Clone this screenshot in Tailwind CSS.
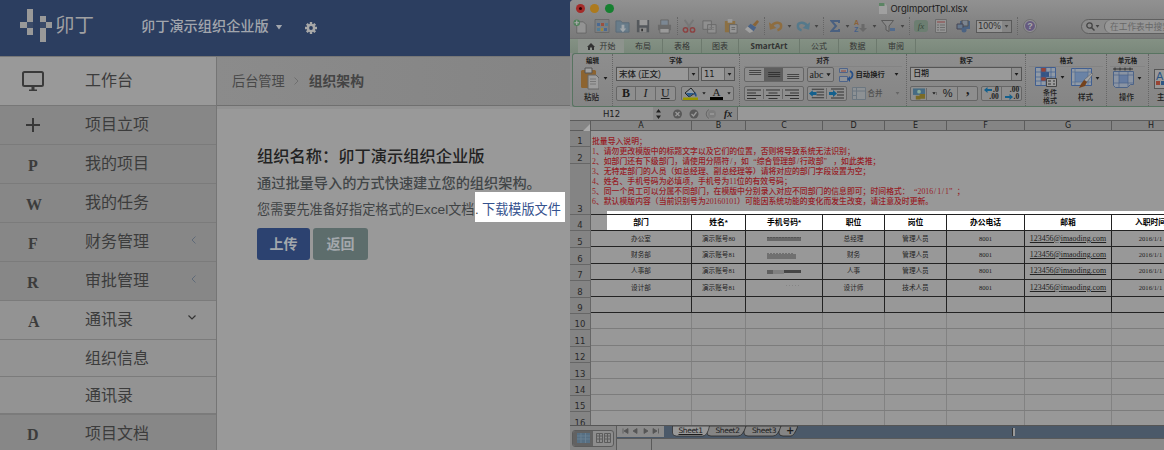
<!DOCTYPE html>
<html lang="zh-CN">
<head>
<meta charset="utf-8">
<title>组织架构导入</title>
<script src="https://cdn.jsdelivr.net/npm/@tailwindcss/browser@4"></script>
</head>
<body class="w-[1164px] h-[450px] overflow-hidden bg-[#999] font-['Liberation_Sans','Noto_Sans_CJK_SC',sans-serif]">
<svg class="hidden">
  <defs>
    <symbol id="caret" viewBox="0 0 6 4"><path d="M.5 0h5L3 3.6z" fill="currentColor"/></symbol>
    <symbol id="al" viewBox="0 0 14 10"><path d="M0 1h14M0 4h9M0 6.500h14M0 9.500h9" stroke="#333"/></symbol>
    <symbol id="ac" viewBox="0 0 14 10"><path d="M0 1h14M2.500 4h9M0 6.500h14M2.500 9.500h9" stroke="#333"/></symbol>
    <symbol id="ar" viewBox="0 0 14 10"><path d="M0 1h14M5 4h9M0 6.500h14M5 9.500h9" stroke="#333"/></symbol>
  </defs>
</svg>
<div class="flex w-[1164px] h-[450px]">

<!-- web app -->
<div class="w-[570px] h-[450px] flex flex-col shrink-0 overflow-hidden">
  <header class="h-[56px] shrink-0 bg-[#2c3e60] flex items-center text-[#a2a6ad]">
    <svg class="ml-5 w-8 h-[34px] -mt-1.5" viewBox="0 0 32 34" fill="#999"><path d="M7 1h6v13H7zM0 14h7v6H0zM7 20h6v7H7zM20 8h6v6h-6zM26 14h6v6h-6zM20 20h6v14h-6z"/><path d="M7 14h6v6H7zM20 14h6v6h-6z" fill="#3a4a68"/></svg>
    <span class="ml-[3px] w-[41px] -mt-[7px] text-[19.500px] leading-5 font-normal text-[#a0a0a2] whitespace-nowrap">卯丁</span>
    <span class="ml-[45px] -mt-[4px] text-[14.200px] font-medium leading-5 whitespace-nowrap">卯丁演示组织企业版</span>
    <svg class="ml-[6px] w-2 h-[5px] -mt-[2px]" viewBox="0 0 6 4"><use href="#caret"/></svg>
    <svg class="ml-[22px] w-3 h-3" viewBox="0 0 12 12"><g stroke="#a8a8a8" stroke-width="2.400"><path d="M6 0v12M0 6h12M1.800 1.800l8.400 8.400M10.200 1.800l-8.400 8.400"/></g><circle cx="6" cy="6" r="4.300" fill="#a8a8a8"/><circle cx="6" cy="6" r="1.900" fill="#2c3e60"/></svg>
  </header>
  <div class="flex flex-1 border-t border-[#777]">
    <nav class="w-[217px] border-r border-[#757575] text-[16px] text-[#3c3c3c] leading-5 bg-[#878787] shrink-0">
      <div class="h-[49px] bg-[#999] border-b border-[#777] flex items-center">
        <svg class="ml-[22px] w-[22px] h-5 mr-[41px]" viewBox="0 0 22 20"><rect x="1" y="1" width="20" height="14" rx="1.500" fill="none" stroke="#3a3a3a" stroke-width="2"/><path d="M9.500 16h3v2.500h2.500V20H7v-1.500h2.500z" fill="#3a3a3a"/></svg><span>工作台</span></div>
      <div class="h-[39px] border-b border-[#7b7b7b] flex items-center"><svg class="ml-[26px] mr-[45px]" width="14" height="14" viewBox="0 0 14 14"><path d="M7 0v14M0 7h14" stroke="#383838" stroke-width="2"/></svg>项目立项</div>
      <div class="h-[39px] border-b border-[#7b7b7b] flex items-center"><b class="w-[57px] pt-[3px] ml-[28px] font-['Liberation_Serif',serif]">P</b>我的项目</div>
      <div class="h-[39px] border-b border-[#7b7b7b] flex items-center"><b class="w-[59px] pt-[3px] ml-[26px] font-['Liberation_Serif',serif]">W</b>我的任务</div>
      <div class="h-[39px] border-b border-[#7b7b7b] flex items-center"><b class="w-[57px] pt-[3px] ml-[28px] font-['Liberation_Serif',serif]">F</b>财务管理<svg class="ml-[42px] -mt-1 w-[5px] h-2" viewBox="0 0 5 8"><path d="M4.500.5L1 4l3.500 3.500" fill="none" stroke="#5f6a78"/></svg></div>
      <div class="h-[39px] border-b border-[#7b7b7b] flex items-center"><b class="w-[58px] pt-[3px] ml-[27px] font-['Liberation_Serif',serif]">R</b>审批管理<svg class="ml-[42px] -mt-1 w-[5px] h-2" viewBox="0 0 5 8"><path d="M4.500.5L1 4l3.500 3.500" fill="none" stroke="#5f6a78"/></svg></div>
      <div class="h-[39px] border-b border-[#7b7b7b] bg-[#939393] flex items-center"><b class="w-[57px] pt-[3px] ml-[28px] font-['Liberation_Serif',serif]">A</b>通讯录<svg class="ml-[55px] -mt-1.5 w-2 h-[5px]" viewBox="0 0 8 5"><path d="M.5.500L4 4l3.500-3.500" fill="none" stroke="#333" stroke-width="1.200"/></svg></div>
      <div class="h-[37px] border-b border-[#7b7b7b] bg-[#939393] flex items-center pl-[85px] pt-px">组织信息</div>
      <div class="h-[38px] border-b-2 border-[#7b7b7b] bg-[#939393] flex items-center pl-[85px] pt-[2px]">通讯录</div>
      <div class="h-[37px] flex items-center"><b class="w-[58px] pt-[3px] ml-[27px] font-['Liberation_Serif',serif]">D</b>项目文档</div>
    </nav>
    <main class="flex-1">
      <div class="h-[49px] bg-linear-to-r from-[#8b8b8b] to-[#848484] border-b border-[#6f6f6f] flex items-center pl-[15px] text-[13.200px] text-[#484848]">
        <span class="whitespace-nowrap pt-[2px]">后台管理</span>
        <svg class="ml-[9px] mr-[10px] w-[5px] h-2" viewBox="0 0 5 8"><path d="M.5.500L4 4 .5 7.500" fill="none" stroke="#6f6f6f"/></svg>
        <span class="text-[13.800px] font-bold text-[#444] pt-[3px]">组织架构</span>
      </div>
      <div class="h-[3px] bg-[#929292]"></div>
      <section class="pl-10 pt-[36px] whitespace-nowrap">
        <h1 class="text-[16.250px] leading-[22px] font-medium text-[#222]">组织名称：卯丁演示组织企业版</h1>
        <p class="mt-[6px] text-[14.200px] leading-5 font-medium text-[#424648]">通过批量导入的方式快速建立您的组织架构。</p>
        <div class="h-[30px] flex items-center text-[13.150px] leading-[30px] text-[#3f4345] -mt-px">
          <div class="w-[218px] pt-[5px]">您需要先准备好指定格式的<span class="text-[13.700px]">Excel</span>文档</div>
          <div class="w-[90px] h-[30px] bg-white flex items-center pt-[5px]"><span class="w-[7px]">.</span><a class="text-[#35528e]">下载模版文件</a></div>
        </div>
        <div class="flex gap-[3px] mt-[6px] text-[14px] font-bold text-[#a3a8ac]">
          <button class="w-[53px] h-8 rounded-[3px] bg-[#2c4270]">上传</button>
          <button class="w-[55px] h-8 rounded-[3px] bg-[#5d6d6c]">返回</button>
        </div>
      </section>
    </main>
  </div>
</div>

<!-- spreadsheet window -->
<div class="w-[594px] h-[450px] shrink-0 bg-[#2c3e60]">
<div class="w-[594px] h-[450px] overflow-hidden bg-[#8a8a8a] rounded-tl-[4px] flex flex-col text-[#1c1c1c]">
  <div class="h-[38px] shrink-0 bg-linear-to-b from-[#919191] to-[#7a7a7a] flex flex-col">
    <div class="h-4 flex items-center pl-[5.500px]">
      <i class="size-[9px] rounded-full bg-[#a42c2a] flex items-center justify-center"><i class="size-[3px] rounded-full bg-[#300]"></i></i>
      <i class="ml-[5.500px] size-[9px] rounded-full bg-[#ad7a1d]"></i>
      <i class="ml-[5.500px] size-[9px] rounded-full bg-[#168030]"></i>
      <svg class="ml-[265px] w-2 h-[11px]" viewBox="0 0 8 11"><path d="M0 0h5.500L8 2.500V11H0z" fill="#a0a0a0"/><path d="M0 0h5.500v3H0z" fill="#5c8464"/></svg>
      <span class="ml-[4px] text-[9.500px] font-['Inter',sans-serif] leading-4 tracking-[-.15px] pt-px">OrgImportTpl.xlsx</span>
    </div>
    <div class="h-[20px] grid items-center justify-items-center text-[#454545] grid-cols-[21px_21px_21px_20px_22px_4px_19px_22px_21px_20px_6px_18px_8px_19px_8px_6px_17px_8px_19px_8px_20px_8px_6px_18px_22px_22px_40px_6px_20px_41px_83px]">
      <svg class="size-[15px]" viewBox="0 0 16 16"><path d="M4 3h7l3 3v9H4z" fill="#939393" stroke="#666"/><circle cx="4" cy="4" r="3.500" fill="#50805a"/><path d="M4 1.500v5M1.500 4h5" stroke="#aaa" stroke-width="1.300"/></svg>
      <svg class="size-[16px]" viewBox="0 0 16 16"><path d="M1 1.500h14v13H1z" fill="#7b7f82" stroke="#6a6a6a"/><path d="M3 5h3v3H3zM10 10h3v3h-3z" fill="#4a6992"/><path d="M7 5h3v3H7z" fill="#9b503e"/><path d="M11 5h3v3h-3zM3 10h3v3H3z" fill="#547c93"/><path d="M7 10h2v3H7z" fill="#9b883e"/></svg>
      <svg class="size-[15px]" viewBox="0 0 16 16"><path d="M1 2h5l2 2h7v10H1z" fill="#687c8a" stroke="#5c6c78"/><path d="M7 6h3v4h2l-3.500 4L5 10h2z" fill="#a0a6aa"/></svg>
      <svg class="size-[14px]" viewBox="0 0 16 16"><path d="M1 1h14v14H1z" fill="#55595d"/><path d="M4 1h9v6H4z" fill="#999"/><path d="M4 10h8v5H4z" fill="#8a8a8a"/><path d="M6 11h2v3H6z" fill="#333"/></svg>
      <svg class="size-[15px]" viewBox="0 0 16 16"><path d="M4 1h8v6H4z" fill="#7c8894" stroke="#666"/><path d="M1 6h14v6H1z" fill="#6b6b6b"/><path d="M3 10h10v5H3z" fill="#9a9a9a" stroke="#666"/></svg>
      <i class="h-[18px] border-l border-dotted border-[#666]"></i>
      <svg class="size-[14px]" viewBox="0 0 16 16"><path d="M3 1l7 10M13 1L6 11" stroke="#777" stroke-width="2"/><circle cx="4" cy="12.500" r="2.500" fill="none" stroke="#8c4242" stroke-width="1.700"/><circle cx="12" cy="12.500" r="2.500" fill="none" stroke="#8c4242" stroke-width="1.700"/></svg>
      <svg class="size-[15px]" viewBox="0 0 16 16"><path d="M1 2h9v9H1zM6 6h9v9H6z" fill="#8f8f8f" stroke="#6a6a6a"/><path d="M8 9h5M8 11h5" stroke="#777"/></svg>
      <svg class="size-[15px]" viewBox="0 0 16 16"><path d="M2 2h11v12H2z" fill="#8b7044"/><path d="M5 0h5v4H5z" fill="#999"/><path d="M7 6h8v9H7z" fill="#969696" stroke="#666"/><path d="M9 9h4M9 11h4" stroke="#666"/></svg>
      <svg class="size-[15px]" viewBox="0 0 16 16"><path d="M14 1l2 2-4 5-3-2z" fill="#8a6538"/><path d="M7 5l6 4-3 4-6-5z" fill="#496388"/><path d="M4 8l6 5-4 2-5-4z" fill="#a1a1a1"/></svg>
      <i class="h-[18px] border-l border-dotted border-[#666]"></i>
      <svg class="w-[15px] h-3" viewBox="0 0 16 12"><path d="M3 6C6 1 13 2 13 6c0 3-2 4-4 4.500" fill="none" stroke="#8e6d40" stroke-width="2.600"/><path d="M0 2l1 8 7-2z" fill="#8e6d40"/></svg>
      <svg class="w-[5px] h-[3px]"><use href="#caret"/></svg>
      <svg class="w-[15px] h-3" viewBox="0 0 16 12"><path d="M13 6C10 1 3 2 3 6c0 3 2 4 4 4.500" fill="none" stroke="#55798b" stroke-width="2.600"/><path d="M16 2l-1 8-7-2z" fill="#55798b"/></svg>
      <svg class="w-[5px] h-[3px]"><use href="#caret"/></svg>
      <i class="h-[18px] border-l border-dotted border-[#666]"></i>
      <svg class="w-[10px] h-3" viewBox="0 0 10 12"><path d="M9 3V1H1.500L6 6l-4.500 5H9V9" fill="none" stroke="#4a6080" stroke-width="2"/></svg>
      <svg class="w-[5px] h-[3px]"><use href="#caret"/></svg>
      <div class="flex items-center"><div class="text-[7px] leading-[7px] font-bold"><div class="text-[#8b6139]">A</div><div class="text-[#46618a]">Z</div></div><svg class="w-2 h-2 mt-1" viewBox="0 0 8 8"><path d="M2.500 0h3v4H8L4 8 0 4h2.500z" fill="#696969"/></svg></div>
      <svg class="w-[5px] h-[3px]"><use href="#caret"/></svg>
      <svg class="w-[15px] h-3" viewBox="0 0 15 12"><path d="M.5.500h12L8 6v5.500L5 10V6z" fill="#888" stroke="#5a5a5a"/><path d="M9 8h5v3H9z" fill="#526b8d"/></svg>
      <svg class="w-[5px] h-[3px]"><use href="#caret"/></svg>
      <i class="h-[18px] border-l border-dotted border-[#666]"></i>
      <span class="w-[14px] h-3 rounded-[3px] bg-[#6c7e71] text-[9px] leading-[12px] text-center italic font-['Liberation_Serif',serif] text-[#38473c]">fx</span>
      <svg class="w-3 h-[14px]" viewBox="0 0 12 14"><path d="M.5.500h11v13H.5z" fill="#949494" stroke="#6c6c6c"/><path d="M2 3h8" stroke="#904444"/><path d="M2 6h2M5 6h5M2 8.500h2M5 8.500h5M2 11h2M5 11h5" stroke="#6d6d6d"/></svg>
      <svg class="w-[15px] h-[13px]" viewBox="0 0 15 13"><path d="M4 1h10v8H4z" fill="#4b6383"/><path d="M6 0h6v6H6z" fill="#7c8590" stroke="#555"/><path d="M1 4h6v5H1z" fill="#66788c" stroke="#445"/><circle cx="8" cy="10" r="2.500" fill="#4b6383"/></svg>
      <div class="w-9 h-[13px] border border-[#5a5a5a] bg-[#979797] flex items-center text-[8.500px] font-['DejaVu_Sans',sans-serif]"><span class="flex-1 pl-px tracking-[-.4px] text-[#333]">100%</span><span class="w-[9px] h-full bg-[#858585] flex items-center justify-center"><svg class="w-[5px] h-[3px]"><use href="#caret"/></svg></span></div>
      <i class="h-[18px] border-l border-dotted border-[#666]"></i>
      <span class="size-[12px] rounded-full border border-[#999] outline outline-[#707070] bg-[#665b80] text-[#aaa] text-[9px] leading-[10px] text-center font-bold">?</span>
      <span></span>
      <div class="w-[90px] h-[15px] ml-[7px] rounded-l-full border border-[#5f5f5f] bg-[#8b8b8b] flex items-center pl-[4px]">
        <svg class="w-[9px] h-[9px]" viewBox="0 0 9 9"><circle cx="3.500" cy="3.500" r="2.700" fill="none" stroke="#444" stroke-width="1.300"/><path d="M5.500 5.500L8.500 8.500" stroke="#444" stroke-width="1.500"/></svg><svg class="w-[5px] h-[3px]"><use href="#caret"/></svg>
        <span class="ml-1 flex-1 h-full rounded-l-full bg-[#969696] border-l border-[#666] pl-[5px] text-[8.700px] leading-[14px] text-[#676767] whitespace-nowrap overflow-hidden">在工作表中搜索</span>
      </div>
    </div>
  </div>

  <!-- ribbon tabs -->
  <div class="h-[15px] shrink-0 bg-linear-to-b from-[#849184] to-[#7a887b] border-t border-[#717171] flex text-[8px] leading-[15px] text-center text-[#333] pl-2">
    <span class="w-[46px] bg-[#8d938d] flex items-center justify-center gap-[5px]"><svg class="w-2 h-[7px]" viewBox="0 0 8 7"><path d="M4 0l4 4H7v3H5V4.500H3V7H1V4H0z" fill="#333"/></svg>开始</span>
    <span class="w-[39px] border-r border-[#6c796d]">布局</span><span class="w-[39px] border-r border-[#6c796d]">表格</span><span class="w-[37px] border-r border-[#6c796d]">图表</span>
    <span class="w-[61px] border-r border-[#6c796d] font-bold font-['Open_Sans',sans-serif] leading-[13px]">SmartArt</span><span class="w-[39px] border-r border-[#6c796d]">公式</span><span class="w-[38px] border-r border-[#6c796d]">数据</span><span class="w-[39px] border-r border-[#6c796d]">审阅</span>
  </div>

  <!-- ribbon -->
  <div class="h-[54px] shrink-0 ml-[2px] border-y border-l border-[#587461] rounded-l-[3px] bg-linear-to-b from-[#8e8e8e] to-[#858585] flex text-[7.500px] leading-[9px] font-medium">
    <div class="w-[40px] border-r border-dotted border-[#666] flex flex-col items-center">
      <div class="h-[11px] pt-[2px] text-[6.500px] font-bold w-full text-center">编辑</div>
      <div class="flex items-center gap-[4px] pl-[4px] pt-[2px]"><svg class="w-[19px] h-[23px]" viewBox="0 0 19 23"><rect x="1" y="3" width="15" height="18" rx="1.500" fill="#8d6430"/><path d="M5 1h7v5H5z" fill="#a0a0a0" stroke="#555"/><path d="M8 8h8l3 3v11H8z" fill="#9d9d9d" stroke="#666"/><path d="M10 12h6M10 14.500h6M10 17h6" stroke="#777"/></svg><svg class="w-[5px] h-[3px]"><use href="#caret"/></svg></div>
      <div class="mt-[3px] pr-[2px]">粘贴</div>
    </div>
    <div class="w-[127px] border-r border-dotted border-[#666] px-[3px] flex flex-col">
      <div class="h-[13px] pt-[2px] text-[6.500px] font-bold text-center border-b border-[#838383]">字体</div>
      <div class="flex gap-[2px] text-[8.500px] leading-[12px]">
        <div class="w-[83px] h-[14px] bg-[#999] border border-[#555] flex justify-between pl-[2px]">宋体 (正文)<span class="w-[10px] bg-[#8c8c8c] border-l border-[#666] flex items-center justify-center"><svg class="w-[5px] h-[3px]"><use href="#caret"/></svg></span></div>
        <div class="w-[34px] h-[14px] bg-[#999] border border-[#555] flex justify-between pl-[2px] font-['DejaVu_Sans',sans-serif]">11<span class="w-[10px] bg-[#8c8c8c] border-l border-[#666] flex items-center justify-center"><svg class="w-[5px] h-[3px]"><use href="#caret"/></svg></span></div>
      </div>
      <div class="mt-[5px] flex gap-[5px]">
        <div class="w-[60px] h-[15px] rounded-[2px] border border-[#666] bg-[#8e8e8e] grid grid-cols-3 divide-x divide-[#6a6a6a] text-center font-['Liberation_Serif',serif] text-[12px] leading-[13px]"><b>B</b><i>I</i><u>U</u></div>
        <div class="w-[53px] h-[15px] rounded-[2px] border border-[#666] bg-[#8e8e8e] grid grid-cols-[18px_8px_17px_8px] items-center justify-items-center text-[11px] leading-[10px]">
          <svg class="w-[15px] h-[13px]" viewBox="0 0 15 13"><path d="M2 6l6-5 4 5-6 4z" fill="#8f9ba5" stroke="#222"/><path d="M3 6h8l-5 4z" fill="#2c5c8c"/><path d="M12 5c2 2 2 4 1 5l-2-3z" fill="#224e82"/><path d="M0 10.500h15V13H0z" fill="#989700"/></svg><svg class="w-[4px] h-[3px]"><use href="#caret"/></svg>
          <span class="font-['Liberation_Serif',serif] border-b-[3px] border-black w-[13px] h-[13px] text-center">A</span><svg class="w-[4px] h-[3px]"><use href="#caret"/></svg>
        </div>
      </div>
    </div>
    <div class="w-[168px] border-r border-dotted border-[#666] px-[4px] flex flex-col">
      <div class="h-[13px] pt-[2px] text-[6.500px] font-bold text-center border-b border-[#838383]">对齐</div>
      <div class="flex items-center h-[15px]">
        <div class="w-[60px] h-[15px] rounded-[2px] border border-[#666] bg-[#8e8e8e] grid grid-cols-3 text-[#444]">
          <svg class="w-full h-[13px]" viewBox="0 0 19 13"><path d="M4 2.500h12M4 4.500h12M4 6.500h12" stroke="currentColor"/></svg>
          <svg class="w-full h-[13px] bg-[#5e5e5e] text-[#333]" viewBox="0 0 19 13"><path d="M4 4.500h12M4 6.500h12M4 8.500h12" stroke="currentColor"/></svg>
          <svg class="w-full h-[13px]" viewBox="0 0 19 13"><path d="M4 6.500h12M4 8.500h12M4 10.500h12" stroke="currentColor"/></svg></div>
        <div class="ml-[3px] w-[27px] h-[15px] rounded-[2px] border border-[#666] bg-[#8e8e8e] flex items-center justify-center gap-[2px] text-[10px] font-['Liberation_Serif',serif]">abc<svg class="w-[5px] h-[4px]"><use href="#caret"/></svg></div>
        <svg class="ml-[5px] w-[15px] h-[14px]" viewBox="0 0 15 14"><path d="M.5.500h8v4h-8zM.5 8.500h8v5h-8z" fill="#8f9399" stroke="#4e648a"/><path d="M2 3h5" stroke="#943"/><path d="M11 3c4 2 3 7-1 8" fill="none" stroke="#264f88" stroke-width="1.700"/><path d="M11 8v6l-3-3z" fill="#264f88"/></svg>
        <span class="ml-[2px] w-[34px] whitespace-nowrap font-bold text-[7.300px]">自动换行</span><svg class="ml-[4px] w-[5px] h-[3px]"><use href="#caret"/></svg>
      </div>
      <div class="mt-[4px] flex items-center h-[15px]">
        <div class="w-[60px] h-[15px] rounded-[2px] border border-[#666] bg-[#8e8e8e] grid grid-cols-3 divide-x divide-[#6a6a6a] items-center"><svg class="h-[10px] w-full"><use href="#al" width="18" height="10"/></svg><svg class="h-[10px] w-full"><use href="#ac" width="18" height="10"/></svg><svg class="h-[10px] w-full"><use href="#ar" width="18" height="10"/></svg></div>
        <div class="ml-[3px] w-[40px] h-[15px] rounded-[2px] border border-[#666] bg-[#8e8e8e] grid grid-cols-2 divide-x divide-[#6a6a6a] items-center">
          <svg class="w-full h-[11px]" viewBox="0 0 19 11"><path d="M4 1h13M9 4h8M9 7h8M4 10h13" stroke="#333"/><path d="M1 5.500L5 2v2h4v3H5v2z" fill="#14608d"/></svg><svg class="w-full h-[11px]" viewBox="0 0 19 11"><path d="M4 1h13M10 4h7M10 7h7M4 10h13" stroke="#333"/><path d="M10 5.500L6 2v2H2v3h4v2z" fill="#14608d"/></svg></div>
        <svg class="ml-[5px] w-[14px] h-[13px]" viewBox="0 0 14 13"><path d="M.5.500h13v12H.5zM4.500.5v12M.5 4h13M.5 8.500h4" fill="#8d9194" stroke="#6c7780"/></svg>
        <span class="ml-[2px] w-[22px] text-[#505050]">合并</span><svg class="ml-[5px] w-[5px] h-[3px] text-[#666]"><use href="#caret"/></svg>
      </div>
    </div>
    <div class="w-[119px] border-r border-dotted border-[#666] px-[3px] flex flex-col">
      <div class="h-[13px] pt-[2px] text-[6.500px] font-bold text-center border-b border-[#838383]">数字</div>
      <div class="w-[112px] h-[14px] bg-[#999] border border-[#555] flex justify-between pl-[2px] text-[8px] leading-[12px]">日期<span class="w-[10px] bg-[#8c8c8c] border-l border-[#666] flex items-center justify-center"><svg class="w-[5px] h-[3px]"><use href="#caret"/></svg></span></div>
      <div class="mt-[5px] flex gap-[3px]">
        <div class="w-[68px] h-[15px] rounded-[2px] border border-[#666] bg-[#8e8e8e] grid grid-cols-[18px_9px_20px_19px] items-center justify-items-center divide-x divide-[#6a6a6a] text-[11px] leading-[13px]"><svg class="w-[14px] h-[12px]" viewBox="0 0 14 12"><path d="M0 0h13v7H0z" fill="#466b83"/><circle cx="6.500" cy="3.500" r="2" fill="#8a9"/><path d="M7 6h6v5H7zM3 8h5v4H3z" fill="#7a6b26"/></svg><svg class="w-[6px] h-[3px] pl-px"><use href="#caret"/></svg><span class="w-full text-center">%</span><b class="w-full text-center text-[14px] leading-[6px] h-[13px] font-['Liberation_Serif',serif]">,</b></div>
        <div class="w-[41px] h-[15px] rounded-[2px] border border-[#666] bg-[#8e8e8e] grid grid-cols-2 divide-x divide-[#6a6a6a] text-[7.500px] leading-[6.500px] font-bold font-['Liberation_Serif',serif]">
          <div class="pr-[2px] text-right"><div class="flex justify-end items-center gap-px h-[6.500px]"><svg class="w-[8px] h-[6px]" viewBox="0 0 8 6"><path d="M0 3l3.500-3v2H8v2H3.500v2z" fill="#14608d"/></svg>.0</div>.00</div>
          <div class="pr-[2px] text-right">.00<div class="flex justify-end items-center gap-px h-[6.500px]"><svg class="w-[8px] h-[6px]" viewBox="0 0 8 6"><path d="M8 3L4.500 0v2H0v2h4.500v2z" fill="#14608d"/></svg>.0</div></div></div>
      </div>
    </div>
    <div class="w-[81px] border-r border-dotted border-[#666] px-[3px]">
      <div class="h-[13px] pt-[2px] text-[6.500px] font-bold text-center border-b border-[#838383]">格式</div>
      <div class="flex pl-[3px]">
        <div class="w-[37px] text-center leading-[8px] text-[7px]"><div class="flex items-center gap-[2px] pl-[3px]"><svg class="w-[23px] h-[21px]" viewBox="0 0 23 21"><path d="M.5.500h20v18H.5z" fill="#919aa5" stroke="#415f91"/><path d="M6 1h5v4H6zM6 10h5v4H6z" fill="#994335"/><path d="M6 5h8v5H6z" fill="#365483"/><path d="M0 5h20M0 10h20M0 14h20M6 0v18M11 0v18M16 0v18" stroke="#415f91" stroke-width=".7"/><path d="M11.500 11.500h10v8h-10z" fill="#9c9c9c" stroke="#444"/><path d="M13 14h3M18 14h2M13 17h3M18 17h2" stroke="#333"/></svg><svg class="w-[5px] h-[3px]"><use href="#caret"/></svg></div><div class="mt-[1px]">条件<br>格式</div></div>
        <div class="w-[36px] text-center"><div class="flex items-center gap-[2px] pl-[3px]"><svg class="w-[22px] h-[22px]" viewBox="0 0 22 22"><path d="M.5 1.500h20v17H.5z" fill="#919aa5" stroke="#415f91"/><path d="M4 5h13v10H4z" fill="#6a83a6"/><path d="M0 5h20M0 15h20M4 1v17M17 1v17" stroke="#536d94" stroke-width=".7"/><path d="M21 6l1 1-6 8-3-2z" fill="#a5a5a5" stroke="#555" stroke-width=".5"/><path d="M13 13l3 2-2 4-6 2 2-4z" fill="#75421c"/></svg><svg class="w-[5px] h-[3px]"><use href="#caret"/></svg></div><div class="mt-[4px]">样式</div></div>
      </div>
    </div>
    <div class="w-[42px] border-r border-dotted border-[#666] px-[3px] text-center">
      <div class="h-[13px] pt-[2px] text-[6.500px] font-bold border-b border-[#838383]">单元格</div>
      <div class="flex items-center gap-[2px] pl-[2px]"><svg class="w-[23px] h-[22px]" viewBox="0 0 23 22"><path d="M1 2h20M3 .5v3M8 .5v3M13 .5v3M18 .5v3" stroke="#333" fill="none"/><path d="M1.500 4.500h20v13h-3l-3 3h-12l-2-2z" fill="#8a94a3" stroke="#4c6387"/><path d="M7 8h9v8H7z" fill="#657ba0"/><path d="M1 8h20M1 16h20M7 4v16M16 4v16" stroke="#4c6387" stroke-width=".7"/></svg><svg class="w-[5px] h-[3px]"><use href="#caret"/></svg></div>
      <div class="mt-[4px] pr-[2px]">操作</div>
    </div>
    <div class="w-[15px] pl-[5px] overflow-hidden">
      <div class="h-[15px]"></div>
      <div class="w-[20px] h-[20px] border border-[#555] bg-[#999] text-[#2d5684] text-[11px] leading-[12px] pl-[1px]">A<div class="flex gap-px -mt-px"><i class="size-[4px] bg-[#943]"></i><i class="size-[4px] bg-[#2d5684]"></i></div></div><div class="mt-[4px] ml-[3px] w-4">主题</div>
    </div>
  </div>

  <!-- formula bar -->
  <div class="h-[13px] shrink-0 bg-[#888] flex items-center">
    <div class="w-[83px] h-full bg-[#959595] text-center text-[8.500px] leading-[14px] font-['DejaVu_Sans',sans-serif]">H12</div>
    <svg class="w-[12px] h-[10px]" viewBox="0 0 12 10"><path d="M5.500 0L8 3.500H3zM5.500 10L3 6.500h5z" fill="#222"/></svg>
    <svg class="ml-[7px] w-[48px] h-[10px]" viewBox="0 0 48 10"><circle cx="5.500" cy="5" r="4.500" fill="#595959"/><path d="M3.500 3l4 4M7.500 3l-4 4" stroke="#999" stroke-width="1.300"/><circle cx="22" cy="5" r="4.500" fill="#595959"/><path d="M19.500 5l2 2 3-4" fill="none" stroke="#999" stroke-width="1.300"/><path d="M37 .5a5 5 0 0 0 0 9" fill="none" stroke="#666"/><circle cx="40" cy="5" r="4" fill="#7d7d7d"/><path d="M38 5h4" stroke="#aaa"/></svg>
    <i class="ml-[4px] w-[13px] text-[10px] leading-[12px] font-bold font-['Liberation_Serif',serif]">fx</i>
    <span class="flex-1 h-full bg-[#989898] border-l border-[#666]"></span>
  </div>

  <!-- column letters -->
  <div class="h-[11px] shrink-0 border-y border-[#5c5c5c] bg-[#858585] grid grid-cols-[21px_101px_54px_77px_62px_62px_78px_87px_78px] text-[8px] leading-[10px] text-center font-['DejaVu_Sans',sans-serif] divide-x divide-[#5c5c5c]">
    <span class="flex justify-end items-end"><svg class="w-[7px] h-[7px]" viewBox="0 0 7 7"><path d="M7 0v7H0z" fill="#aaa"/></svg></span><span>A</span><span>B</span><span>C</span><span>D</span><span>E</span><span>F</span><span>G</span><span>H</span>
  </div>

  <!-- cells -->
  <div class="h-[294px] shrink-0 overflow-hidden flex">
    <div id="nums" class="w-[21px] shrink-0 bg-[#848484] border-r border-[#666] font-['DejaVu_Sans',sans-serif] text-[8.500px] leading-[10px] text-center text-[#292929]"></div>
    <div class="w-[573px] shrink-0 bg-[#989898]">
      <div class="h-[80px] pt-[6px] pl-[1px] text-[#971c26] text-[7.850px] leading-[10px] font-medium whitespace-pre font-['Liberation_Serif','Noto_Sans_CJK_SC',serif]" id="notes"></div>
      <div id="table"></div>
    </div>
  </div>

  <!-- sheet tabs and status -->
  <div class="h-[25px] shrink-0 flex border-t border-[#555] bg-[#858585]">
    <div class="w-[47px] flex items-center justify-center border-r border-[#5b5b5b]"><div class="flex w-[42px] h-[17px] border border-[#5b5b5b] rounded-[3px] overflow-hidden bg-[#8d8d8d]"><span class="w-[20px] bg-[#626262] flex items-center justify-center"><svg class="w-[13px] h-[10px]" viewBox="0 0 13 10"><path d="M0 0h13v10H0z" fill="#566f83"/><path d="M0 3h13M0 6h13M4 0v10M8.500 0v10" stroke="#6d8496" stroke-width=".8"/></svg></span><span class="flex-1 flex items-center justify-center"><svg class="w-[15px] h-[10px]" viewBox="0 0 15 10"><path d="M.5.500h6v9h-6zM8.500.5h6v9h-6zM.5 3h6M.5 6h6M8.500 3h6M8.500 6h6M3.500 0v10M11.500 0v10" fill="none" stroke="#5c5c5c"/></svg></span></div></div>
    <div class="flex-1">
      <div class="h-[12px] bg-[#4b5969] flex items-start text-[8px] leading-[10px] font-['DejaVu_Sans',sans-serif]">
        <svg class="w-[47px] h-[11px] bg-[#8b8b8b]" viewBox="0 0 47 11"><path d="M6 2.500v5M7 5l4-2.500v5zM16 5l4-2.500v5zM31 5l-4-2.500v5zM40 5l-4-2.500v5zM41.500 2.500v5" fill="#555" stroke="#555" stroke-width=".8"/></svg>
        <div class="relative ml-[8px] w-[126px] h-[11px]">
          <svg class="absolute inset-0 w-[126px] h-[11px]" viewBox="0 0 126 11" stroke="#2a2a2a" stroke-width=".8"><path d="M107 0v7q0 3 4 3h8q3 0 7-10z" fill="#858585"/><path d="M72 0v7q0 3 4 3h25q5 0 8-10z" fill="#858585"/><path d="M35 0v7q0 3 4 3h27q5 0 8-10z" fill="#858585"/><path d="M.5 0v7q0 3 4 3h26q5 0 7-10z" fill="#989898" stroke-width=".7"/></svg>
          <div class="relative grid grid-cols-[37px_37px_36px_16px] text-center tracking-[-.4px] text-[7.500px]"><u>Sheet1</u><span>Sheet2</span><span>Sheet3</span><b class="text-[10px]">+</b></div>
        </div>
        <span class="ml-[214px] w-[3px] h-[8px] mt-[2px] border-l border-[#333] bg-[#999]"></span>
      </div>
      <div class="h-[12px] border-t border-[#5a5a5a] bg-[#8a8a8a] flex"><span class="w-[35px] border-r border-[#5a5a5a]"></span></div>
    </div>
  </div>
</div>
</div>
</div>
<script>
  // quotes take a full cell and slashes half a cell, as in a fixed-pitch Chinese face
  document.getElementById('notes').innerHTML = [
    '批量导入说明；',
    '1、请勿更改模版中的标题文字以及它们的位置，否则将导致系统无法识别；',
    '2、如部门还有下级部门，请使用分隔符/，如“综合管理部/行政部” ，如此类推；',
    '3、无特定部门的人员（如总经理、副总经理等）请将对应的部门字段设置为空；',
    '4、姓名、手机号码为必填项，手机号为11位的有效号码；',
    '5、同一个员工可以分属不同部门，在模版中分别录入对应不同部门的信息即可；时间格式：“2016/1/1”；',
    '6、默认模版内容（当前识别号为20160101）可能因系统功能的变化而发生改变，请注意及时更新。'
  ].map(s => s.replace(/[“”\/]/g, c => c === '/' ? '<i class="inline-block w-1 not-italic text-center">/</i>'
    : c === '“' ? '<i class="inline-block w-[7.800px] not-italic text-right">“</i>'
    : '<i class="inline-block w-[7.800px] not-italic text-left">”</i>')).join('\n');

  // row heights, top to bottom
  const heights = [16, 17, 51, 16, 17, 16.5, 16.5, 16.5, 16.5, 16.4, 16.4, 16.4, 16.4, 16.4, 16.4, 16.4];
  document.getElementById('nums').innerHTML = heights.map((h, i) =>
    `<div class="flex flex-col justify-end border-b border-[#666]" style="height:${h}px">${i + 1}</div>`).join('');

  const smudge = [
    '<svg class="w-[36px] h-[6px]" viewBox="0 0 36 6"><path d="M1 1h34v4H1z" fill="#686868"/><path d="M1 1.500h34" stroke="#555" stroke-dasharray="2 1"/></svg>',
    '<svg class="w-[36px] h-[8px]" viewBox="0 0 36 8"><path d="M1 3h29v5H1z" fill="#707070"/><path d="M1 2.500h26" stroke="#707070" stroke-dasharray="2 1"/></svg>',
    '<svg class="w-[36px] h-[5px]" viewBox="0 0 36 5"><path d="M1 1h6v4H1z" fill="#606060"/><path d="M7 1h11v4H7z" fill="#808080"/><path d="M18 1h17v3H18z" fill="#454545"/></svg>',
    '<svg class="w-[36px] h-[8px]" viewBox="0 0 36 8"><path d="M20 1.500h15" stroke="#858585" stroke-dasharray="1 2"/></svg>'
  ];
  const mail = '<u class="text-[7.900px] text-[#222]">123456@imaoding.com</u>';
  const data = [
    ['办公室', '演示账号80', smudge[0], '总经理', '管理人员', '8001', mail, '2016/1/1'],
    ['财务部', '演示账号81', smudge[1], '财务', '管理人员', '8001', mail, '2016/1/1'],
    ['人事部', '演示账号81', smudge[2], '人事', '管理人员', '8001', mail, '2016/1/1'],
    ['设计部', '演示账号81', smudge[3], '设计师', '技术人员', '8001', mail, '2016/1/1'],
    ['', '', '', '', '', '', '', '']
  ];
  const head = ['部门', '姓名*', '手机号码*', '职位', '岗位', '办公电话', '邮箱', '入职时间'];
  let html = `<div class="h-[3px] ml-4 bg-white"></div>
    <div class="h-[17px] border-y border-[#222] bg-linear-to-r from-[#999] from-[16px] to-white to-[16px] grid grid-cols-[101px_54px_77px_62px_62px_78px_87px_78px] text-[7.800px] leading-[15px] text-center font-bold text-black">` +
    head.map(t => `<span class="border-r border-[#222]">${t}</span>`).join('') + '</div>';
  data.forEach((r, i) => {
    html += `<div class="grid grid-cols-[101px_54px_77px_62px_62px_78px_87px_78px] border-b border-[#222] text-[6.600px] text-center text-[#222] font-['Liberation_Serif','Noto_Sans_CJK_SC',serif]" style="height:${i ? 16.5 : 16}px">` +
      r.map(t => `<span class="border-r border-[#222] flex items-center justify-center">${t}</span>`).join('') + '</div>';
  });
  for (let i = 0; i < 7; i++) {
    html += '<div class="h-[16.4px] grid grid-cols-[101px_54px_77px_62px_62px_78px_87px_78px] border-b border-[#7c7c7c]">' +
      '<span class="border-r border-[#828282]"></span>'.repeat(8) + '</div>';
  }
  document.getElementById('table').innerHTML = html;
</script>
</body>
</html>
